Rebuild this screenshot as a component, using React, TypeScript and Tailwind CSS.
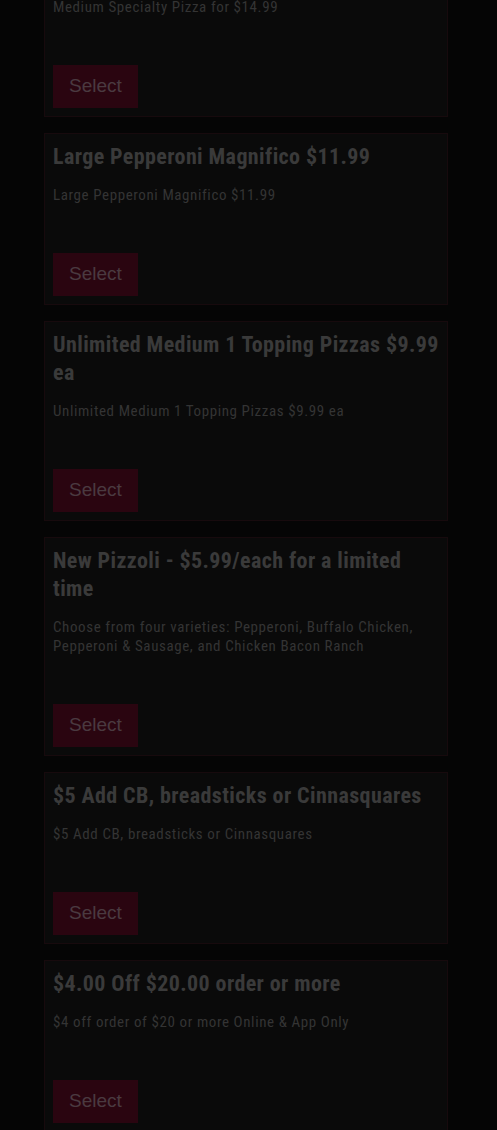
const deals = [
  {
    title: "Medium Specialty Pizza for $14.99",
    text: "Medium Specialty Pizza for $14.99",
  },
  {
    title: "Large Pepperoni Magnifico $11.99",
    text: "Large Pepperoni Magnifico $11.99",
  },
  {
    title: "Unlimited Medium 1 Topping Pizzas $9.99 ea",
    text: "Unlimited Medium 1 Topping Pizzas $9.99 ea",
  },
  {
    title: "New Pizzoli - $5.99/each for a limited time",
    text: "Choose from four varieties: Pepperoni, Buffalo Chicken, Pepperoni & Sausage, and Chicken Bacon Ranch",
  },
  {
    title: "$5 Add CB, breadsticks or Cinnasquares",
    text: "$5 Add CB, breadsticks or Cinnasquares",
  },
  {
    title: "$4.00 Off $20.00 order or more",
    text: "$4 off order of $20 or more Online & App Only",
  },
];

const condensed = {
  fontFamily: '"Roboto Condensed", "Liberation Sans Narrow", "DejaVu Sans Condensed", sans-serif',
};

function DealCard({ title, text }: { title: string; text: string }) {
  return (
    <div className="border border-[#170a0d] bg-[#0a0a0a] pt-[9px] pr-1 pb-2 pl-2">
      <h2
        className="text-[22px] font-bold leading-[28px] tracking-[0.4px] text-[#3a3a3a]"
        style={condensed}
      >
        {title}
      </h2>
      <p
        className="mt-[15px] text-[15px] leading-[19px] tracking-[0.6px] text-[#343434]"
        style={condensed}
      >
        {text}
      </p>
      <button className="mt-12 h-[43px] bg-[#2a0510] px-4 text-[19px] text-[#4a3a40] [font-family:'Liberation_Sans',Arial,sans-serif]">
        Select
      </button>
    </div>
  );
}

export default function App() {
  return (
    <div className="h-[1130px] overflow-hidden bg-[#050505]">
      <div className="ml-[44px] -mt-[55px] flex w-[404px] flex-col gap-4">
        {deals.map((deal) => (
          <DealCard key={deal.title} {...deal} />
        ))}
      </div>
    </div>
  );
}
